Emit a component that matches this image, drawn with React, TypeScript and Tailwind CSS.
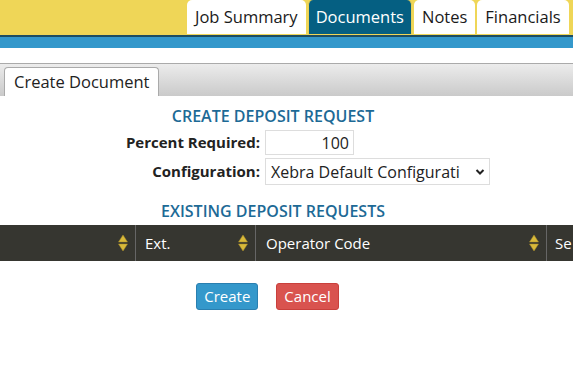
import { useState } from "react";

const tabs = ["Job Summary", "Documents", "Notes", "Financials"];

function SortIcon() {
  return (
    <svg width="10" height="18" viewBox="0 0 10 18" className="shrink-0">
      <path d="M5 1 L9.5 8 H0.5 Z" fill="#d8b93a" stroke="#a88f2a" strokeWidth="0.5" />
      <path d="M5 17 L9.5 10 H0.5 Z" fill="#d8b93a" stroke="#a88f2a" strokeWidth="0.5" />
    </svg>
  );
}

export default function App() {
  const [percent, setPercent] = useState("100");

  return (
    <div className="h-[366px] w-[573px] overflow-hidden bg-white font-['Open_Sans',sans-serif] text-[#222]">
      {/* top tab bar */}
      <div className="flex h-[35px] items-start gap-[2px] bg-[#efd657] pl-[187px]">
        {tabs.map((tab) => (
          <div
            key={tab}
            className={
              tab === "Documents"
                ? "flex h-[34px] shrink-0 items-center rounded-t-[5px] border-x border-[#e6cf57] bg-[#055f82] px-[7px] text-[16.5px] text-white"
                : "flex h-[34px] shrink-0 items-center rounded-t-[5px] bg-white px-[8px] text-[16.5px] text-[#1a1a1a]"
            }
          >
            {tab}
          </div>
        ))}
      </div>
      <div className="h-[2px] bg-[#1d4d62]" />
      <div className="h-[11px] bg-[#3498cb]" />

      {/* sub tabs */}
      <div className="mt-[15px] flex h-[33px] items-end border-t border-[#aaa] bg-gradient-to-b from-[#ececec] to-[#cacaca] pl-[4px]">
        <div className="flex h-[29px] items-center rounded-t-[4px] border border-b-0 border-[#aaa] bg-white px-[9px] text-[16.5px] text-[#222]">
          Create Document
        </div>
      </div>

      {/* form */}
      <div className="flex w-[546px] flex-col items-center">
        <h2 className="mt-[9px] text-[16px] leading-[22px] font-semibold text-[#1d6a96]">CREATE DEPOSIT REQUEST</h2>
        <div className="mt-[3px] grid grid-cols-[260px_auto] items-center gap-x-[5px] gap-y-[3px] self-start">
          <label className="text-right text-[15px] font-bold text-[#222]">Percent Required:</label>
          <input
            value={percent}
            onChange={(e) => setPercent(e.target.value)}
            className="h-[25px] w-[89px] border border-[#ddd] px-[4px] text-right text-[16px] text-[#222] outline-none"
          />
          <label className="text-right text-[15px] font-bold text-[#222]">Configuration:</label>
          <div className="flex h-[27px] w-[225px] items-center justify-between border border-[#ddd] pl-[5px] pr-[4px] text-[16px] text-[#222]">
            <span className="truncate">Xebra Default Configurati</span>
            <svg width="10" height="8" viewBox="0 0 10 8" className="shrink-0">
              <path d="M1.5 2 L5 5.5 L8.5 2" stroke="#222" strokeWidth="2" fill="none" />
            </svg>
          </div>
        </div>
        <h2 className="mt-[15px] text-[16px] leading-[22px] font-semibold text-[#1d6a96]">EXISTING DEPOSIT REQUESTS</h2>
      </div>

      {/* table header */}
      <div className="mt-[3px] flex h-[36px] bg-[#363630] text-[15px] text-white">
        <div className="flex w-[136px] shrink-0 items-center justify-end border-r border-[#666] pr-[7px]">
          <SortIcon />
        </div>
        <div className="flex w-[120px] shrink-0 items-center justify-between border-r border-[#666] pl-[9px] pr-[7px]">
          <span>Ext.</span>
          <SortIcon />
        </div>
        <div className="flex w-[291px] shrink-0 items-center justify-between border-r border-[#666] pl-[10px] pr-[7px]">
          <span>Operator Code</span>
          <SortIcon />
        </div>
        <div className="flex shrink-0 items-center pl-[8px]">
          <span>Se</span>
        </div>
      </div>

      {/* buttons */}
      <div className="mt-[22px] flex w-[535px] justify-center gap-[18px]">
        <button className="h-[27px] rounded-[3px] border border-[#2a7fb0] bg-[#3498cb] px-[7px] text-[15px] text-white">
          Create
        </button>
        <button className="h-[27px] rounded-[3px] border border-[#c9403c] bg-[#d9534f] px-[7px] text-[15px] text-white">
          Cancel
        </button>
      </div>
    </div>
  );
}
